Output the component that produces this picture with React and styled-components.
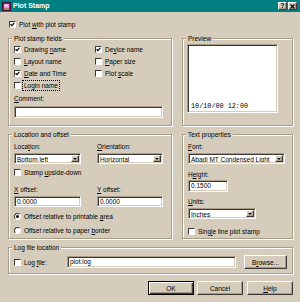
import styled, { createGlobalStyle, css } from 'styled-components'

const FACE = '#d5ccbb'
const SHADOW = '#a89c86'
const DARK = '#3c3a36'

const GlobalStyle = createGlobalStyle`
  html, body { margin: 0; padding: 0; background: ${FACE}; }
  *, *::before, *::after { box-sizing: border-box; }
`

const sunken = css`
  border: 1px solid;
  border-color: ${SHADOW} #fff #fff ${SHADOW};
  box-shadow: inset 1px 1px 0 ${DARK}, inset -1px -1px 0 ${FACE};
`

const raised = css`
  border: 1px solid;
  border-color: #fff ${DARK} ${DARK} #fff;
  box-shadow: inset -1px -1px 0 ${SHADOW};
`

const Window = styled.div`
  width: 300px;
  height: 302px;
  background: ${FACE};
  font-family: 'Liberation Sans', Arial, sans-serif;
  font-size: 6.5px;
  color: #000;
  display: flex;
  flex-direction: column;
  overflow: hidden;
`

const TitleBar = styled.div`
  height: 12px;
  background: #008080;
  display: flex;
  align-items: center;
  padding: 0 3px 0 2px;
  gap: 2px;
`

const TitleText = styled.div`
  flex: 1;
  color: #fff;
  font-weight: bold;
  font-size: 7px;
  line-height: 12px;
`

const TitleButton = styled.div`
  width: 9px;
  height: 8px;
  background: ${FACE};
  ${raised};
  display: flex;
  align-items: center;
  justify-content: center;
  font-weight: bold;
  font-size: 6.5px;
  line-height: 1;
  margin-left: ${({ gap }) => gap || 0}px;
`

const Body = styled.div`
  flex: 1;
  display: flex;
  flex-direction: column;
  padding: 0 7px 0 8px;
`

const U = styled.span`
  text-decoration: underline;
`

const CheckRow = styled.div`
  display: flex;
  align-items: center;
  gap: 3px;
  height: ${({ h }) => h || 10}px;
  margin-top: ${({ mt }) => mt || 0}px;
  margin-left: ${({ ml }) => ml || 0}px;
  white-space: nowrap;
`

const Box = styled.span`
  flex: none;
  width: 7px;
  height: 7px;
  background: #fff;
  border: 1px solid;
  border-color: ${DARK} #fff #fff ${DARK};
  display: flex;
  align-items: center;
  justify-content: center;
`

const RadioDot = styled.span`
  flex: none;
  width: 7px;
  height: 7px;
  border-radius: 50%;
  background: #fff;
  border: 1px solid;
  border-color: ${DARK} #fff #fff ${DARK};
  display: flex;
  align-items: center;
  justify-content: center;

  &::after {
    content: '';
    width: 3px;
    height: 3px;
    border-radius: 50%;
    background: ${({ on }) => (on ? '#000' : 'transparent')};
  }
`

const Focus = styled.span`
  outline: 1px dotted #000;
  outline-offset: 1px;
`

const Group = styled.div`
  position: relative;
  width: ${({ w }) => w}px;
  height: ${({ h }) => h}px;
  border: 1px solid ${SHADOW};
  box-shadow: inset 1px 1px 0 #fff, 1px 1px 0 #fff;
  padding: ${({ pad }) => pad || '7px 0 0 5px'};
  flex: none;
`

const Legend = styled.div`
  position: absolute;
  top: -5px;
  left: 3px;
  padding: 0 2px;
  background: ${FACE};
  line-height: 9px;
  white-space: nowrap;
`

const Row = styled.div`
  display: flex;
  gap: ${({ gap }) => gap || 10}px;
  margin-top: ${({ mt }) => mt || 0}px;
`

const CheckGrid = styled.div`
  display: grid;
  grid-template-columns: 81px 1fr;
  grid-auto-rows: 12px;
`

const Label = styled.div`
  height: ${({ h }) => h || 9}px;
  line-height: ${({ h }) => h || 9}px;
  margin-top: ${({ mt }) => mt || 0}px;
  white-space: nowrap;
`

const Field = styled.div`
  ${sunken};
  background: #fff;
  width: ${({ w }) => w}px;
  height: ${({ h }) => h || 12}px;
  margin-top: ${({ mt }) => mt || 0}px;
  padding: 0 2px;
  line-height: ${({ h }) => (h || 12) - 2}px;
  white-space: nowrap;
  overflow: hidden;
  flex: none;
`

const Combo = styled.div`
  ${sunken};
  background: #fff;
  width: ${({ w }) => w}px;
  height: 11px;
  margin-top: ${({ mt }) => mt || 0}px;
  display: flex;
  align-items: stretch;
  padding: 1px;
`

const ComboText = styled.div`
  flex: 1;
  padding-left: 1px;
  line-height: 9px;
  white-space: nowrap;
  overflow: hidden;
`

const DropButton = styled.div`
  width: 8px;
  background: ${FACE};
  ${raised};
  display: flex;
  align-items: center;
  justify-content: center;

  &::after {
    content: '';
    border-left: 2px solid transparent;
    border-right: 2px solid transparent;
    border-top: 2px solid #000;
  }
`

const TwoCol = styled.div`
  display: grid;
  grid-template-columns: 67px 66px;
  column-gap: 16px;
  margin-top: ${({ mt }) => mt || 0}px;
`

const PreviewBox = styled.div`
  ${sunken};
  background: #fff;
  width: 91px;
  height: 69px;
  display: flex;
  flex-direction: column;
  justify-content: flex-end;
  padding: 0 0 2px 3px;
  font-family: 'Liberation Mono', 'Courier New', monospace;
  font-size: 6.8px;
  line-height: 7px;
  white-space: pre;
`

const LogRow = styled.div`
  display: flex;
  align-items: center;
  height: 14px;
`

const LogLabel = styled.div`
  width: 53px;
  display: flex;
  align-items: center;
  gap: 3px;
`

const Button = styled.div`
  width: ${({ w }) => w || 46}px;
  height: 14px;
  background: ${FACE};
  display: flex;
  align-items: center;
  justify-content: center;
  margin-left: ${({ ml }) => ml || 0}px;
  flex: none;
  ${({ primary }) =>
    primary
      ? css`
          border: 1px solid #000;
          box-shadow: inset 1px 1px 0 #fff, inset -1px -1px 0 ${DARK}, inset -2px -2px 0 ${SHADOW};
        `
      : raised};
`

const ButtonRow = styled.div`
  display: flex;
  justify-content: flex-end;
  margin-top: 7px;
`

const Check = ({ on }) => (
  <Box>
    {on && (
      <svg width="5" height="5" viewBox="0 0 5 5">
        <polyline points="0.6,2.2 1.9,3.6 4.4,0.8" fill="none" stroke="#000" strokeWidth="1.2" />
      </svg>
    )}
  </Box>
)

const AppIcon = () => (
  <svg width="9" height="9" viewBox="0 0 9 9">
    <rect x="0.5" y="0.5" width="8" height="8" fill="#7a2a7a" stroke="#3a103a" />
    <rect x="2" y="2" width="5" height="4" fill="#e8a0d8" />
    <rect x="2" y="6.5" width="5" height="1" fill="#f0d040" />
    <rect x="3" y="3" width="3" height="1" fill="#fff" />
  </svg>
)

export default function App() {
  return (
    <>
      <GlobalStyle />
      <Window>
        <TitleBar>
          <AppIcon />
          <TitleText>Plot Stamp</TitleText>
          <TitleButton>?</TitleButton>
          <TitleButton gap={-1}>
            <svg width="5" height="5" viewBox="0 0 5 5">
              <path d="M0.5 0.5 L4.5 4.5 M4.5 0.5 L0.5 4.5" stroke="#000" strokeWidth="1.2" />
            </svg>
          </TitleButton>
        </TitleBar>
        <Body>
          <CheckRow h={8} mt={8} ml={1}>
            <Check on />
            <span>
              Plot <U>w</U>ith plot stamp
            </span>
          </CheckRow>

          <Row mt={10}>
            <Group w={164} h={88} pad="4px 0 0 5px">
              <Legend>Plot stamp fields</Legend>
              <CheckGrid>
                <CheckRow h={12}>
                  <Check on />
                  <span>
                    Drawing <U>n</U>ame
                  </span>
                </CheckRow>
                <CheckRow h={12}>
                  <Check on />
                  <span>
                    De<U>v</U>ice name
                  </span>
                </CheckRow>
                <CheckRow h={12}>
                  <Check />
                  <span>
                    <U>L</U>ayout name
                  </span>
                </CheckRow>
                <CheckRow h={12}>
                  <Check />
                  <span>
                    <U>P</U>aper size
                  </span>
                </CheckRow>
                <CheckRow h={12}>
                  <Check on />
                  <span>
                    <U>D</U>ate and Time
                  </span>
                </CheckRow>
                <CheckRow h={12}>
                  <Check />
                  <span>
                    Plot <U>s</U>cale
                  </span>
                </CheckRow>
                <CheckRow h={12}>
                  <Check />
                  <Focus>
                    Lo<U>g</U>in name
                  </Focus>
                </CheckRow>
              </CheckGrid>
              <Label mt={3}>
                <U>C</U>omment:
              </Label>
              <Field w={149} mt={3} />
            </Group>

            <Group w={111} h={88} pad="5px 0 0 4px">
              <Legend>Preview</Legend>
              <PreviewBox>10/10/00 12:00</PreviewBox>
            </Group>
          </Row>

          <Row mt={8}>
            <Group w={164} h={105}>
              <Legend>Location and offset</Legend>
              <TwoCol>
                <Label>
                  Loca<U>t</U>ion:
                </Label>
                <Label>
                  <U>O</U>rientation:
                </Label>
                <Combo w={67} mt={2}>
                  <ComboText>Bottom left</ComboText>
                  <DropButton />
                </Combo>
                <Combo w={66} mt={2}>
                  <ComboText>Horizontal</ComboText>
                  <DropButton />
                </Combo>
              </TwoCol>
              <CheckRow mt={3}>
                <Check />
                <span>
                  Stamp <U>u</U>pside-down
                </span>
              </CheckRow>
              <TwoCol mt={8}>
                <Label>
                  <U>X</U> offset:
                </Label>
                <Label>
                  <U>Y</U> offset:
                </Label>
                <Field w={67} h={11} mt={2}>
                  0.0000
                </Field>
                <Field w={66} h={11} mt={2}>
                  0.0000
                </Field>
              </TwoCol>
              <CheckRow mt={4}>
                <RadioDot on />
                <span>
                  Offset relative to printable <U>a</U>rea
                </span>
              </CheckRow>
              <CheckRow mt={4}>
                <RadioDot />
                <span>
                  Offset relative to paper <U>b</U>order
                </span>
              </CheckRow>
            </Group>

            <Group w={111} h={105}>
              <Legend>Text properties</Legend>
              <Label>
                <U>F</U>ont:
              </Label>
              <Combo w={97} mt={2}>
                <ComboText>Abadi MT Condensed Light</ComboText>
                <DropButton />
              </Combo>
              <Label mt={6}>
                H<U>e</U>ight:
              </Label>
              <Field w={40} mt={1}>
                0.1500
              </Field>
              <Label mt={5}>
                <U>U</U>nits:
              </Label>
              <Combo w={68} mt={2}>
                <ComboText>Inches</ComboText>
                <DropButton />
              </Combo>
              <CheckRow mt={7}>
                <Check />
                <span>
                  Sing<U>l</U>e line plot stamp
                </span>
              </CheckRow>
            </Group>
          </Row>

          <Row mt={8}>
            <Group w={285} h={27}>
              <Legend>Log file location</Legend>
              <LogRow>
                <LogLabel>
                  <Check />
                  <span>
                    Log <U>f</U>ile:
                  </span>
                </LogLabel>
                <Field w={169}>plot.log</Field>
                <Button w={43} ml={8}>
                  B<U>r</U>owse...
                </Button>
              </LogRow>
            </Group>
          </Row>

          <ButtonRow>
            <Button primary>OK</Button>
            <Button ml={3}>Cancel</Button>
            <Button ml={4}>
              <U>H</U>elp
            </Button>
          </ButtonRow>
        </Body>
      </Window>
    </>
  )
}
